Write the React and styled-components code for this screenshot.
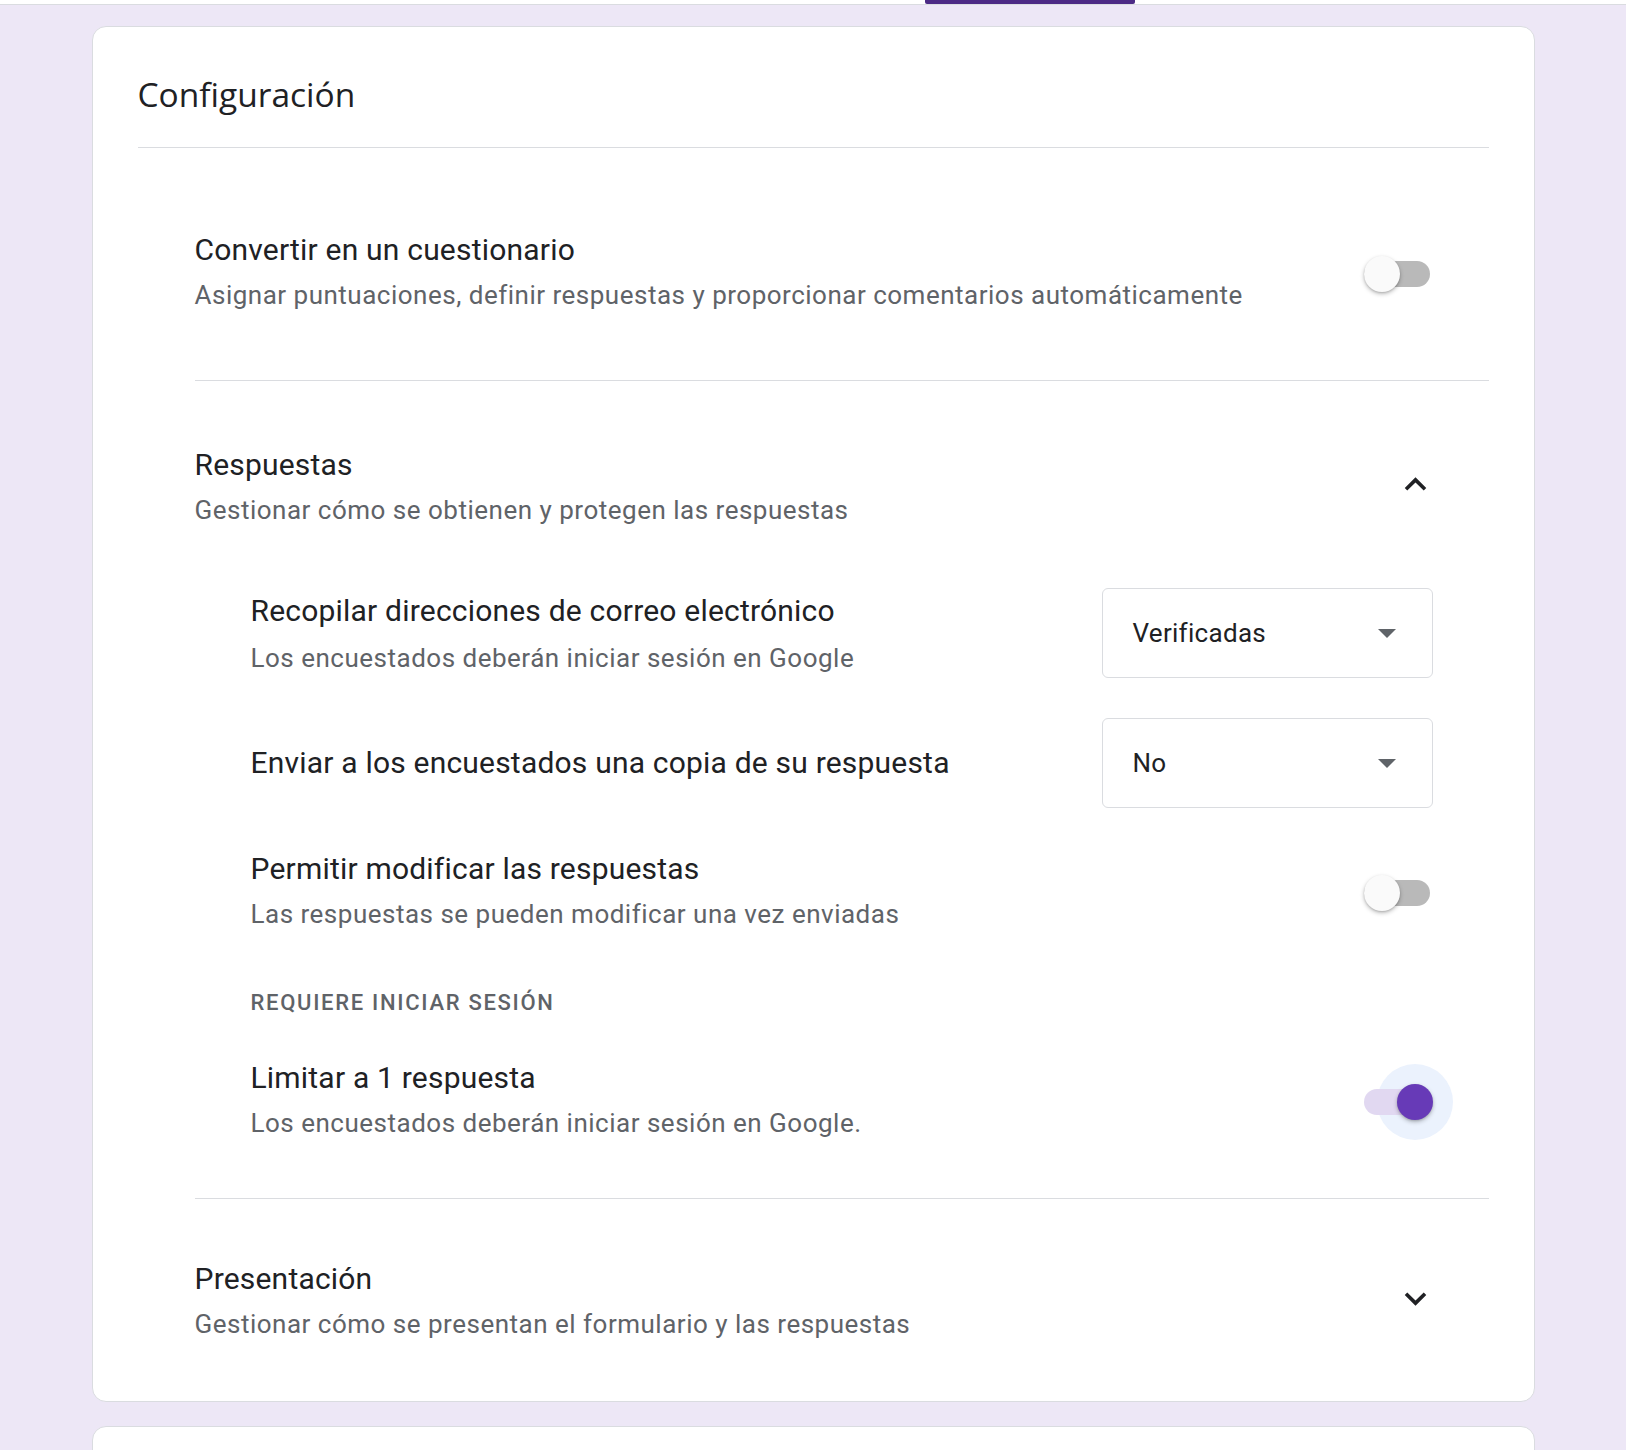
import styled, { createGlobalStyle } from "styled-components";

const GlobalStyle = createGlobalStyle`
  body {
    margin: 0;
    background: #ede7f6;
    font-family: Roboto, "Liberation Sans", Arial, sans-serif;
  }
`;

const Header = styled.div`
  height: 4px;
  background: #fff;
  border-bottom: 1px solid #dadce0;
  display: flex;
  padding-left: 925px;
`;

const TabIndicator = styled.div`
  width: 210px;
  height: 4px;
  background: #4c2a85;
  border-radius: 0 0 2px 2px;
`;

const Page = styled.div`
  padding: 21px 0 0;
`;

const Card = styled.div`
  box-sizing: border-box;
  width: 1443px;
  margin: 0 auto 24px;
  background: #fff;
  border: 1px solid #dadce0;
  border-radius: 14px;
  padding: 47px 45px 0;
  min-height: ${(p) => p.$minHeight || 0}px;
`;

const CardTitle = styled.h1`
  margin: 0;
  padding-bottom: 33px;
  border-bottom: 1px solid #dadce0;
  font-family: "Open Sans", sans-serif;
  font-weight: 400;
  font-size: 33.5px;
  line-height: 40px;
  color: #202124;
`;

const Sections = styled.div`
  margin-left: 57px;
`;

const Section = styled.section`
  padding: ${(p) => p.$top}px 0 ${(p) => p.$bottom}px;
  border-bottom: ${(p) => (p.$last ? "none" : "1px solid #dadce0")};
`;

const Row = styled.div`
  display: flex;
  align-items: center;
  justify-content: space-between;
  padding-right: 56px;
`;

const Text = styled.div`
  display: flex;
  flex-direction: column;
  gap: ${(p) => p.$gap || 7}px;
`;

const Title = styled.div`
  font-size: 30px;
  line-height: 40px;
  letter-spacing: 0.2px;
  color: #202124;
`;

const Subtitle = styled.div`
  font-size: 26px;
  line-height: 36px;
  letter-spacing: 0.5px;
  color: #5f6368;
`;

const Nested = styled.div`
  margin: 60px 0 0 56px;
  display: flex;
  flex-direction: column;
`;

const NestedRow = styled(Row)`
  margin-top: ${(p) => p.$gap || 0}px;
  min-height: ${(p) => p.$height || 0}px;
`;

const Label = styled.div`
  margin-top: 56px;
  font-size: 22px;
  line-height: 30px;
  font-weight: 500;
  letter-spacing: 1.7px;
  color: #5f6368;
  text-transform: uppercase;
`;

const Select = styled.div`
  box-sizing: border-box;
  width: 331px;
  height: 90px;
  border: 1px solid #dadce0;
  border-radius: 6px;
  padding: 0 36px 0 30px;
  display: flex;
  align-items: center;
  justify-content: space-between;
  font-size: 26px;
  letter-spacing: 0.3px;
  color: #202124;
`;

const Caret = styled.span`
  width: 0;
  height: 0;
  border-left: 9px solid transparent;
  border-right: 9px solid transparent;
  border-top: 9px solid #5f6368;
`;

const SwitchBox = styled.div`
  position: relative;
  width: 69px;
  height: 36px;
  margin-top: 4px;
  flex-shrink: 0;
`;

const Track = styled.div`
  position: absolute;
  left: 0;
  right: 3px;
  top: 5px;
  height: 26px;
  border-radius: 13px;
  background: ${(p) => (p.$on ? "#e1d8f1" : "#b9b9b9")};
`;

const Halo = styled.div`
  position: absolute;
  width: 76px;
  height: 76px;
  left: 13px;
  top: -20px;
  border-radius: 50%;
  background: #ebf2fd;
`;

const Thumb = styled.div`
  position: absolute;
  top: 0;
  left: ${(p) => (p.$on ? "33px" : "0")};
  width: 36px;
  height: 36px;
  border-radius: 50%;
  background: ${(p) => (p.$on ? "#673ab7" : "#fafafa")};
  box-shadow: 0 2px 4px rgba(0, 0, 0, 0.25), 0 1px 2px rgba(0, 0, 0, 0.12);
`;

const Chevron = styled.svg`
  width: 43px;
  height: 43px;
  margin: 0 -4px 4px 0;
  fill: #202124;
  transform: ${(p) => (p.$down ? "rotate(180deg)" : "none")};
`;

const Switch = ({ on }) => (
  <SwitchBox>
    {on && <Halo />}
    <Track $on={on} />
    <Thumb $on={on} />
  </SwitchBox>
);

const Expand = ({ down }) => (
  <Chevron viewBox="0 0 24 24" $down={down}>
    <path d="M12 8l-6 6 1.41 1.41L12 10.83l4.59 4.58L18 14z" />
  </Chevron>
);

const Dropdown = ({ value }) => (
  <Select>
    {value}
    <Caret />
  </Select>
);

export default function App() {
  return (
    <>
      <GlobalStyle />
      <Header>
        <TabIndicator />
      </Header>
      <Page>
        <Card>
          <CardTitle>Configuración</CardTitle>
          <Sections>
            <Section $top={82} $bottom={67}>
              <Row>
                <Text>
                  <Title>Convertir en un cuestionario</Title>
                  <Subtitle>Asignar puntuaciones, definir respuestas y proporcionar comentarios automáticamente</Subtitle>
                </Text>
                <Switch />
              </Row>
            </Section>

            <Section $top={64} $bottom={57}>
              <Row>
                <Text>
                  <Title>Respuestas</Title>
                  <Subtitle>Gestionar cómo se obtienen y protegen las respuestas</Subtitle>
                </Text>
                <Expand />
              </Row>
              <Nested>
                <NestedRow $height={90}>
                  <Text $gap={9}>
                    <Title>Recopilar direcciones de correo electrónico</Title>
                    <Subtitle>Los encuestados deberán iniciar sesión en Google</Subtitle>
                  </Text>
                  <Dropdown value="Verificadas" />
                </NestedRow>
                <NestedRow $gap={40} $height={90}>
                  <Title>Enviar a los encuestados una copia de su respuesta</Title>
                  <Dropdown value="No" />
                </NestedRow>
                <NestedRow $gap={41}>
                  <Text>
                    <Title>Permitir modificar las respuestas</Title>
                    <Subtitle>Las respuestas se pueden modificar una vez enviadas</Subtitle>
                  </Text>
                  <Switch />
                </NestedRow>
                <Label>Requiere iniciar sesión</Label>
                <NestedRow $gap={40}>
                  <Text>
                    <Title>Limitar a 1 respuesta</Title>
                    <Subtitle>Los encuestados deberán iniciar sesión en Google.</Subtitle>
                  </Text>
                  <Switch on />
                </NestedRow>
              </Nested>
            </Section>

            <Section $top={60} $bottom={59} $last>
              <Row>
                <Text>
                  <Title>Presentación</Title>
                  <Subtitle>Gestionar cómo se presentan el formulario y las respuestas</Subtitle>
                </Text>
                <Expand down />
              </Row>
            </Section>
          </Sections>
        </Card>
        <Card $minHeight={120} />
      </Page>
    </>
  );
}
